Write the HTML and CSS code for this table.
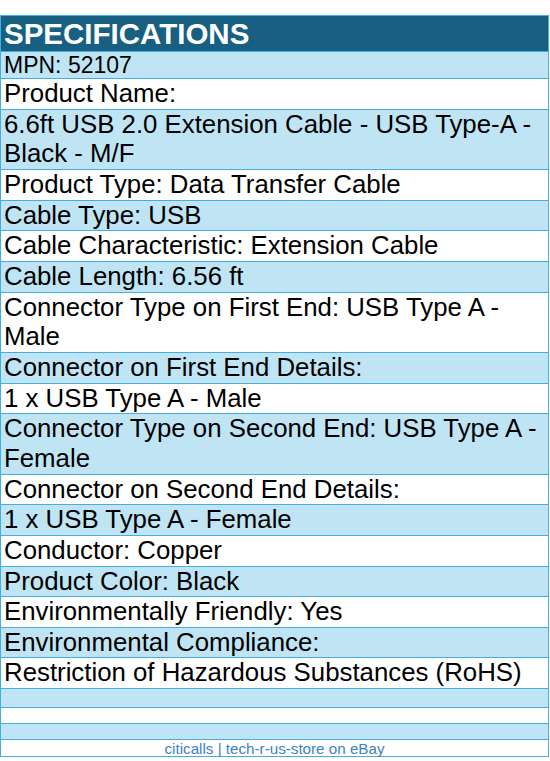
FILE: index.html
```html
<!DOCTYPE html>
<html>
<head>
<meta charset="utf-8">
<link rel="stylesheet" href="styles.css">
</head>
<body>
<div class="spec">
  <div class="row head">SPECIFICATIONS</div>
  <div class="row alt mpn">MPN: 52107</div>
  <div class="row">Product Name:</div>
  <div class="row alt">6.6ft USB 2.0 Extension Cable - USB Type-A - Black - M/F</div>
  <div class="row">Product Type: Data Transfer Cable</div>
  <div class="row alt">Cable Type: USB</div>
  <div class="row">Cable Characteristic: Extension Cable</div>
  <div class="row alt">Cable Length: 6.56 ft</div>
  <div class="row">Connector Type on First End: USB Type A - Male</div>
  <div class="row alt">Connector on First End Details:</div>
  <div class="row">1 x USB Type A - Male</div>
  <div class="row alt">Connector Type on Second End: USB Type A - Female</div>
  <div class="row">Connector on Second End Details:</div>
  <div class="row alt">1 x USB Type A - Female</div>
  <div class="row">Conductor: Copper</div>
  <div class="row alt">Product Color: Black</div>
  <div class="row">Environmentally Friendly: Yes</div>
  <div class="row alt">Environmental Compliance:</div>
  <div class="row">Restriction of Hazardous Substances (RoHS)</div>
  <div class="row alt empty e1"></div>
  <div class="row empty"></div>
  <div class="row alt empty"></div>
  <div class="row foot">citicalls | tech-r-us-store on eBay</div>
</div>
</body>
</html>
```
FILE: styles.css
```css
html, body {
  margin: 0;
  padding: 0;
  background: #ffffff;
}
body {
  padding-top: 15px;
  font-family: "Liberation Sans", Arial, sans-serif;
}
.spec {
  width: 549px;
  box-sizing: border-box;
  border: 1px solid #45aee0;
  border-bottom: none;
  display: flex;
  flex-direction: column;
}
.row {
  border-bottom: 1px solid #45aee0;
  padding: 0 6px 0 3px;
  font-size: 25.8px;
  line-height: 29.65px;
  color: #000;
  background: #ffffff;
}
.alt {
  background: #bfe5f5;
}
.head {
  background: #176082;
  color: #ffffff;
  font-weight: bold;
  font-size: 29.5px;
  line-height: 36px;
  height: 35px;
}
.mpn {
  font-size: 23px;
  line-height: 27px;
  height: 26px;
}
.empty {
  height: 15px;
  padding: 0;
}
.e1 {
  height: 18px;
}
.foot {
  text-align: center;
  font-size: 15.2px;
  line-height: 17px;
  height: 16px;
  padding: 0;
  color: #3c82c6;
}
```
